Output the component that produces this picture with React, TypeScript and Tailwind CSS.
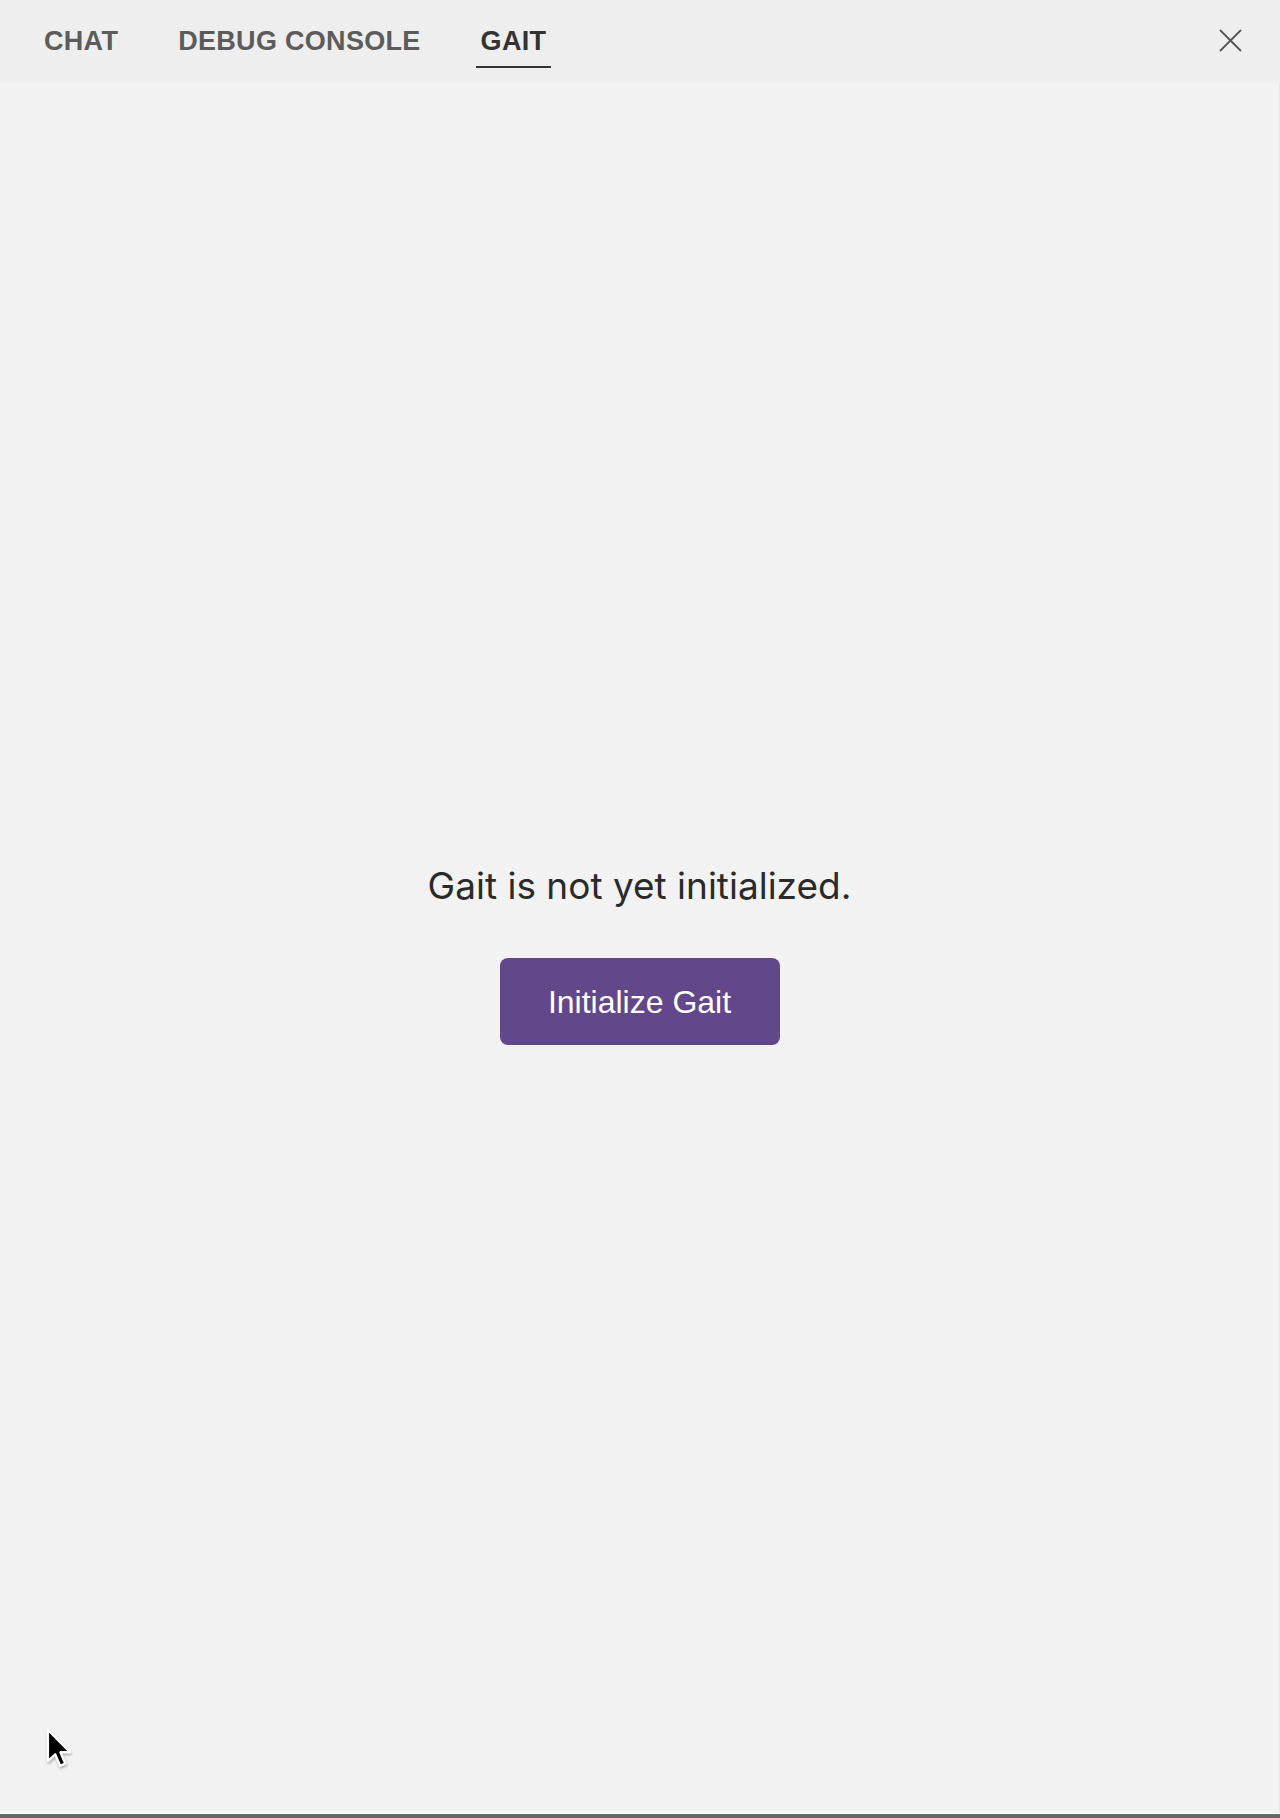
import React from "react";

export default function App() {
  const tabs = [
    { label: "CHAT", active: false },
    { label: "DEBUG CONSOLE", active: false },
    { label: "GAIT", active: true },
  ];
  return (
    <div className="relative w-[1280px] h-[1818px] flex flex-col bg-[#f2f2f2] overflow-hidden">
      <header className="h-[83px] shrink-0 bg-[#eeeeee] flex items-start justify-between pl-[39px] pr-[38px]">
        <nav className="flex gap-[50px] pt-[26px]">
          {tabs.map((t) => (
            <button
              key={t.label}
              className={
                t.active
                  ? "px-[5px] pb-[10px] border-b-2 border-[#333333] text-[#333333] font-bold text-[27px] tracking-[0.3px] leading-[30px] [font-family:'Liberation_Sans',Arial,sans-serif]"
                  : "px-[5px] pb-[10px] border-b-2 border-transparent text-[#5c5c5c] font-bold text-[27px] tracking-[0.3px] leading-[30px] [font-family:'Liberation_Sans',Arial,sans-serif]"
              }
            >
              {t.label}
            </button>
          ))}
        </nav>
        <button className="mt-[29px] w-[23px] h-[23px]" aria-label="Close">
          <svg width="23" height="23" viewBox="0 0 23 23">
            <path d="M1.5 1.5 L21.5 21.5 M21.5 1.5 L1.5 21.5" stroke="#555555" strokeWidth="1.8" strokeLinecap="round" />
          </svg>
        </button>
      </header>
      <main className="flex-1 flex flex-col items-center justify-center pt-[13px] border-r border-[#e6e6e6]">
        <p className="text-[37px] leading-[44px] text-[#2a2a2a] [font-family:Inter,'Noto_Sans',sans-serif]">
          Gait is not yet initialized.
        </p>
        <button className="mt-[50px] w-[280px] h-[87px] rounded-[8px] bg-[#62488a] text-white text-[32px] [font-family:'Liberation_Sans',Arial,sans-serif]">
          Initialize Gait
        </button>
      </main>
      <div className="h-px shrink-0 bg-white" />
      <div className="h-[4px] shrink-0 bg-[#666666]" />
      <svg
        className="absolute left-[44px] top-[1727px] pointer-events-none"
        width="32"
        height="46"
        viewBox="0 0 16 23"
      >
        <defs>
          <filter id="sh" x="-30%" y="-30%" width="160%" height="160%">
            <feDropShadow dx="0.3" dy="0.8" stdDeviation="0.6" floodColor="#000" floodOpacity="0.35" />
          </filter>
        </defs>
        <path
          d="M2 1.5 L2 17 L5.6 13.6 L8.1 19.4 L10.6 18.3 L8.2 12.6 L13 12.6 Z"
          fill="#000"
          stroke="#fff"
          strokeWidth="1.1"
          strokeLinejoin="round"
          filter="url(#sh)"
        />
      </svg>
    </div>
  );
}
